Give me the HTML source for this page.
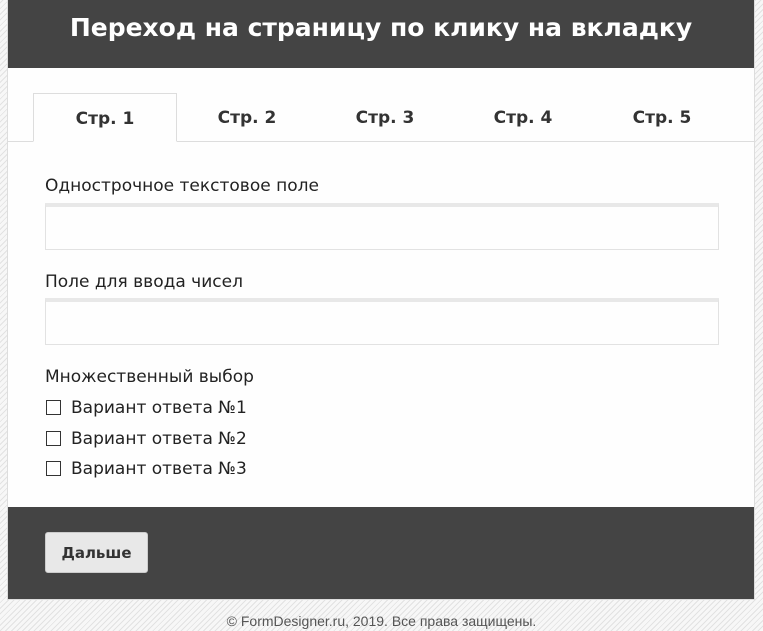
<!DOCTYPE html>
<html><head><meta charset="utf-8"><style>
*{box-sizing:border-box;margin:0;padding:0}
body{width:763px;height:631px;overflow:hidden;background:#f4f4f4 repeating-linear-gradient(-45deg,#f7f7f7 0 3px,#e2e2e2 3px 4px);font-family:"DejaVu Sans","Liberation Sans",sans-serif;position:relative}
.wrap{position:absolute;left:7px;top:0;width:748px;height:600px;background:#fefefe;border:1px solid #ddd;border-top:0}
.hd{height:68px;background:#444;color:#fff;font-weight:bold;font-size:25px;text-align:center;line-height:56px}
.tabs{position:absolute;top:93px;left:0;width:100%;height:49px;border-bottom:1px solid #ddd}
.tab{position:absolute;top:0;height:49px;width:144px;text-align:center;line-height:50px;font-weight:bold;font-size:17px;color:#333}
.tab.a{border:1px solid #ddd;border-bottom:1px solid #fefefe;background:#fefefe}
.lbl{position:absolute;left:37px;font-size:17px;color:#222}
.inp{position:absolute;left:37px;width:674px;height:47px;border:1px solid #e2e2e2;border-top:4px solid #e8e8e8;background:#fefefe}
.cb{position:absolute;left:38px;width:15px;height:15px;border:1px solid #333;background:#fff}
.ft{position:absolute;left:0;top:507px;width:100%;height:92px;background:#444}
.btn{position:absolute;left:37px;top:25px;width:103px;height:41px;background:#e8e8e8;border:1px solid #ccc;border-radius:3px;font-weight:bold;font-size:15px;color:#333;text-align:center;line-height:40px}
.cp{position:absolute;top:613px;left:0;width:763px;text-align:center;font-family:"Liberation Sans",sans-serif;font-size:14px;color:#555}
</style></head><body>
<div class="wrap">
<div class="hd">Переход на страницу по клику на вкладку</div>
<div class="tabs">
<div class="tab a" style="left:25px">Стр. 1</div>
<div class="tab" style="left:167px">Стр. 2</div>
<div class="tab" style="left:305px">Стр. 3</div>
<div class="tab" style="left:443px">Стр. 4</div>
<div class="tab" style="left:582px">Стр. 5</div>
</div>
<div class="lbl" style="top:176px">Однострочное текстовое поле</div>
<div class="inp" style="top:203px"></div>
<div class="lbl" style="top:272px">Поле для ввода чисел</div>
<div class="inp" style="top:298px"></div>
<div class="lbl" style="top:367px">Множественный выбор</div>
<div class="cb" style="top:400px"></div><div class="lbl" style="left:63px;top:398px">Вариант ответа №1</div>
<div class="cb" style="top:431px"></div><div class="lbl" style="left:63px;top:429px">Вариант ответа №2</div>
<div class="cb" style="top:461px"></div><div class="lbl" style="left:63px;top:459px">Вариант ответа №3</div>
<div class="ft"><div class="btn">Дальше</div></div>
</div>
<div class="cp">© FormDesigner.ru, 2019. Все права защищены.</div>
</body></html>
